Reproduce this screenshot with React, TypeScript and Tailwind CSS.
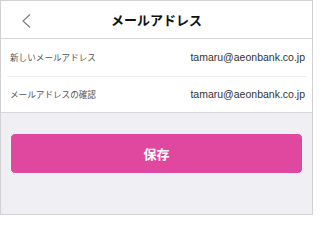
import React from 'react';

const jp = { fontFamily: '"Noto Sans CJK JP", "Noto Sans", sans-serif' };

const Row = ({ label, value, h, last = false }: { label: string; value: string; h: string; last?: boolean }) => (
  <div className={`${h} flex items-center justify-between ${last ? '' : 'border-b border-[#ececec]'}`}>
    <span className="pl-[3px] text-[8.6px] text-[#555]" style={jp}>{label}</span>
    <span className="pr-px text-[10.5px] text-[#333] font-['Liberation_Sans',Arial,sans-serif]">{value}</span>
  </div>
);

export default function App() {
  return (
    <div className="w-[313px] h-[215px] border border-[#d2d2d6] bg-[#efeff4] flex flex-col" style={jp}>
      {/* Header */}
      <header className="h-[38px] shrink-0 bg-white border-b border-[#d8d8dc] relative flex items-center justify-center">
        <svg className="absolute left-[19px] top-[12px]" width="12" height="16" viewBox="0 0 12 16" fill="none">
          <path d="M10 1.5 L3 8 L10 14.5" stroke="#7a7a7a" strokeWidth="1.1" />
        </svg>
        <h1 className="text-[13px] font-bold text-[#111] tracking-[0px]">メールアドレス</h1>
      </header>

      {/* Form rows */}
      <section className="bg-white border-b border-[#d8d8dc] px-[6px]">
        <Row label="新しいメールアドレス" value="tamaru@aeonbank.co.jp" h="h-[38px]" />
        <Row label="メールアドレスの確認" value="tamaru@aeonbank.co.jp" h="h-[35px]" last />
      </section>

      {/* Save button */}
      <div className="pt-[20px] px-[9px]">
        <button className="w-full h-[41px] rounded-[5px] bg-[#e0479e] border border-[#f4f6fb] text-white text-[13px] font-bold">
          保存
        </button>
      </div>
    </div>
  );
}
